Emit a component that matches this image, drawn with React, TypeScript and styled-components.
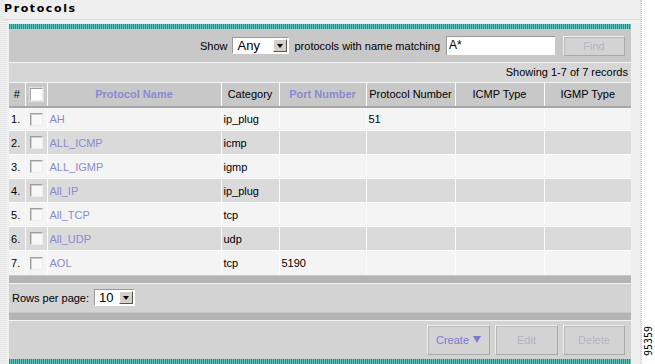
import React from 'react';
import styled, { createGlobalStyle } from 'styled-components';

const GlobalStyle = createGlobalStyle`
  html, body { margin: 0; padding: 0; background: #ffffff; }
  body { font-family: "Liberation Sans", Arial, sans-serif; font-size: 11px; color: #000; }
`;

const Page = styled.div`
  display: flex;
  width: 655px;
  height: 364px;
  overflow: hidden;
`;

const Frame = styled.div`
  width: 633px;
  padding-left: 8px;
  background: #efefef;
  border-right: 1px solid #e2e2e2;
  position: relative;
  &::before{
    content: ''; position: absolute; left: 0; top: 0; bottom: 0; width: 7px;
    background: repeating-linear-gradient(to bottom, #e4e4e4 0 1px, #f2f2f2 1px 2px);
  }
`;

const Side = styled.div`
  width: 13px;
  border-left: 1px dotted #c8c8c8;
  background: #ffffff;
  display: flex;
  align-items: flex-end;
  justify-content: center;
  padding-bottom: 8px;
  > span{
    writing-mode: vertical-rl;
    transform: rotate(180deg);
    font-family: "DejaVu Sans Mono", "Liberation Mono", monospace;
    font-size: 10px;
  }
`;

const Title = styled.h1`
  position: relative;
  margin: 0 0 0 -4px;
  height: 19px;
  line-height: 18px;
  font-size: 11px;
  font-weight: bold;
  letter-spacing: 1.6px;
  font-family: "DejaVu Sans", Verdana, sans-serif;
  border-bottom: 1px solid #dedede;
  background: #efefef;
`;

const Stripe = styled.div<{ $top?: number }>`
  height: 5px;
  margin-top: ${p => p.$top ?? 0}px;
  background: repeating-linear-gradient(to right, #1f8f87 0 1px, #66c2bb 1px 2px);
`;

const Panel = styled.div`
  margin-left: 1px;
  width: 622px;
`;

const Toolbar = styled.div`
  height: 33px;
  background: #c8c8c8;
  border-bottom: 1px solid #f4f4f4;
  display: flex;
  align-items: center;
  justify-content: flex-end;
  padding-right: 6px;
  gap: 5px;
`;

const Label = styled.span`
  font-size: 11px;
  color: #000;
`;

const Select = styled.div<{ $w: number }>`
  width: ${p => p.$w}px;
  height: 17px;
  background: #fff;
  border-top: 1px solid #9a9a9a;
  border-left: 1px solid #9a9a9a;
  border-right: 1px solid #fff;
  border-bottom: 1px solid #fff;
  display: flex;
  align-items: center;
  justify-content: space-between;
  font-size: 13px;
  padding-left: 4px;
  box-sizing: border-box;
`;

const Arrow = styled.span`
  width: 14px;
  height: 13px;
  margin-right: 1px;
  background: #d4d0c8;
  border-top: 1px solid #fff;
  border-left: 1px solid #fff;
  border-right: 1px solid #555;
  border-bottom: 1px solid #555;
  box-sizing: border-box;
  display: flex;
  align-items: center;
  justify-content: center;
  &::after{
    content: '';
    border-left: 3.5px solid transparent;
    border-right: 3.5px solid transparent;
    border-top: 4px solid #000;
  }
`;

const TextInput = styled.div`
  width: 109px;
  height: 19px;
  margin-left: 1px;
  background: #fff;
  border-top: 1px solid #9a9a9a;
  border-left: 1px solid #9a9a9a;
  box-sizing: border-box;
  font-size: 12px;
  padding: 1px 2px;
  margin-right: 3px;
`;

const Button = styled.button<{ $w: number; $h: number; $active?: boolean }>`
  width: ${p => p.$w}px;
  height: ${p => p.$h}px;
  background: #d3d3d3;
  border: 1px solid #f0f0f0;
  border-right-color: #a8a8a8;
  border-bottom-color: #a8a8a8;
  box-shadow: inset 1px 1px 0 #b8b8b8;
  font-family: "Liberation Sans", Arial, sans-serif;
  font-size: 11px;
  color: ${p => (p.$active ? '#7a7acc' : '#b4b4c4')};
  padding: 0;
  display: inline-flex;
  align-items: center;
  justify-content: center;
  gap: 4px;
`;

const Counter = styled.div`
  height: 19px;
  background: #d6d6d6;
  text-align: right;
  padding-right: 3px;
  line-height: 19px;
  font-size: 11px;
`;

const Grid = styled.table`
  width: 622px;
  border-collapse: collapse;
  table-layout: fixed;
  th, td{ border-left: 1px solid #fbfbfb; padding: 0 2px; white-space: nowrap; overflow: hidden; }
  th:first-child, td:first-child{ border-left: none; }
`;

const HeadRow = styled.tr`
  height: 24px;
  background: #c8c8c8;
  border-top: 1px solid #f4f4f4;
  border-bottom: 2px solid #a8a8a8;
`;

const Th = styled.th<{ $link?: boolean }>`
  font-size: 11px;
  font-weight: ${p => (p.$link ? 'bold' : 'normal')};
  color: ${p => (p.$link ? '#8a8ad0' : '#000')};
  text-align: center;
`;

const Row = styled.tr<{ $odd: boolean }>`
  height: 24px;
  background: ${p => (p.$odd ? '#f4f4f4' : '#dadada')};
  border-top: 1px solid #fbfbfb;
  td{ font-size: 11px; }
`;

const NameLink = styled.a`
  color: #8a8ad0;
  text-decoration: none;
`;

const Check = styled.span<{ $head?: boolean }>`
  display: inline-block;
  width: 13px;
  height: 13px;
  box-sizing: border-box;
  vertical-align: middle;
  background: ${p => (p.$head ? '#fff' : '#f8f8f8')};
  border-top: 1px solid #a0a0a0;
  border-left: 1px solid #a0a0a0;
  border-right: 1px solid #ececec;
  border-bottom: 1px solid #ececec;
  box-shadow: ${p => (p.$head ? '0 0 0 1px #e0e0e0' : 'inset 1px 1px 0 #cfcfcf')};
`;

const DarkBar = styled.div`
  height: 7px;
  background: #b4b4b4;
  border-top: 1px solid #c8c8c8;
  border-bottom: 1px solid #f4f4f4;
`;

const Pager = styled.div`
  height: 28px;
  background: #d3d3d3;
  display: flex;
  align-items: center;
  gap: 5px;
  padding-left: 3px;
`;

const Footer = styled.div`
  height: 38px;
  background: #d3d3d3;
  display: flex;
  align-items: center;
  justify-content: flex-end;
  gap: 5px;
  padding-right: 6px;
`;

const Triangle = styled.span`
  border-left: 4px solid transparent;
  border-right: 4px solid transparent;
  border-top: 7px solid #7a7acc;
`;

const rows = [
  { name: 'AH', cat: 'ip_plug', port: '', num: '51' },
  { name: 'ALL_ICMP', cat: 'icmp', port: '', num: '' },
  { name: 'ALL_IGMP', cat: 'igmp', port: '', num: '' },
  { name: 'All_IP', cat: 'ip_plug', port: '', num: '' },
  { name: 'All_TCP', cat: 'tcp', port: '', num: '' },
  { name: 'All_UDP', cat: 'udp', port: '', num: '' },
  { name: 'AOL', cat: 'tcp', port: '5190', num: '' },
];

const App = () => {
  return (
    <Page>
      <GlobalStyle />
      <Frame>
        <Title>Protocols</Title>
        <Panel>
          <Stripe $top={4} />
          <Toolbar>
            <Label>Show</Label>
            <Select $w={57}>Any<Arrow /></Select>
            <Label>protocols with name matching</Label>
            <TextInput>A*</TextInput>
            <Button $w={62} $h={20}>Find</Button>
          </Toolbar>
          <Counter>Showing 1-7 of 7 records</Counter>
          <Grid>
            <colgroup>
              <col style={{ width: 16 }} />
              <col style={{ width: 22 }} />
              <col style={{ width: 174 }} />
              <col style={{ width: 58 }} />
              <col style={{ width: 87 }} />
              <col style={{ width: 89 }} />
              <col style={{ width: 89 }} />
              <col style={{ width: 87 }} />
            </colgroup>
            <thead>
              <HeadRow>
                <Th>#</Th>
                <Th><Check $head /></Th>
                <Th $link>Protocol Name</Th>
                <Th>Category</Th>
                <Th $link>Port Number</Th>
                <Th>Protocol Number</Th>
                <Th>ICMP Type</Th>
                <Th>IGMP Type</Th>
              </HeadRow>
            </thead>
            <tbody>
              {rows.map((r, i) => (
                <Row key={r.name} $odd={i % 2 === 0}>
                  <td>{i + 1}.</td>
                  <td style={{ textAlign: 'center' }}><Check /></td>
                  <td><NameLink>{r.name}</NameLink></td>
                  <td>{r.cat}</td>
                  <td>{r.port}</td>
                  <td>{r.num}</td>
                  <td></td>
                  <td></td>
                </Row>
              ))}
            </tbody>
          </Grid>
          <DarkBar />
          <Pager>
            <Label>Rows per page:</Label>
            <Select $w={41}>10<Arrow /></Select>
          </Pager>
          <DarkBar />
          <Footer>
            <Button $w={63} $h={30} $active>Create <Triangle /></Button>
            <Button $w={63} $h={30}>Edit</Button>
            <Button $w={62} $h={30}>Delete</Button>
          </Footer>
          <Stripe />
        </Panel>
      </Frame>
      <Side><span>95359</span></Side>
    </Page>
  );
};

export default App;
